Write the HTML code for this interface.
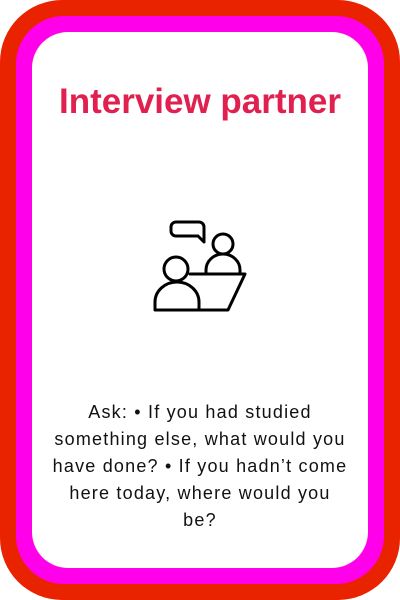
<!DOCTYPE html>
<html><head><style>
html,body{margin:0;padding:0;width:400px;height:600px;overflow:hidden;background:#fff}
.r{position:absolute;left:0;top:0;width:400px;height:600px;background:#e92200;border-radius:62px}
.m{position:absolute;left:16px;top:16px;width:368px;height:568px;background:#ff00ea;border-radius:48px}
.w{position:absolute;left:32px;top:32px;width:336px;height:536px;background:#fff;border-radius:36px}
h1{position:absolute;left:0;width:400px;top:80px;margin:0;text-align:center;font:bold 35px/44px "Liberation Sans",sans-serif;color:#e0204f}
p{position:absolute;left:20px;width:360px;top:399px;margin:0;text-align:center;font:18px/27px "Liberation Sans",sans-serif;letter-spacing:1.2px;color:#111;white-space:nowrap}
svg{position:absolute;left:0;top:0}
</style></head><body>
<div class="r"></div><div class="m"></div><div class="w"></div>
<h1>Interview partner</h1>
<svg width="400" height="600" fill="none" stroke="#000" stroke-width="3" stroke-linejoin="round" stroke-linecap="round">
<path d="M176 222 H199 A5 5 0 0 1 204 227 V242 L198 236 H176 A5 5 0 0 1 171 231 V227 A5 5 0 0 1 176 222 Z"/>
<circle cx="223" cy="244" r="10"/>
<path d="M206 273 V270 A17 16 0 0 1 240 270 V273"/>
<path d="M190 274 H245 L228 310 H200"/>
<circle cx="176" cy="269" r="12"/>
<path d="M155 310 V302 A22 20 0 0 1 199 302 V310 Z"/>
</svg>
<p>Ask: • If you had studied<br>something else, what would you<br>have done? • If you hadn’t come<br>here today, where would you<br>be?</p>
</body></html>
